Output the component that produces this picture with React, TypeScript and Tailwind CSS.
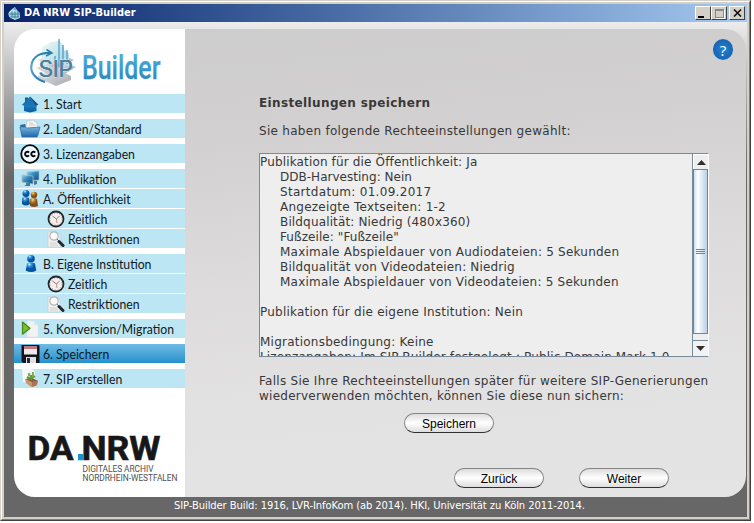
import type { ReactNode } from "react";

const HouseIcon = () => (
  <svg width="18" height="18" viewBox="0 0 18 18">
    <defs><linearGradient id="house" x2="0" y2="1"><stop stopColor="#1d86c4" /><stop offset="1" stopColor="#0a5a9f" /></linearGradient></defs>
    <path d="M4 2.500h3V7H4z" fill="#145d94" />
    <path d="M3 9h12.500v7L9 17.500 3 16z" fill="url(#house)" />
    <path d="M.8 10L9 1.500l8.300 8.200-1.800.8H2.500z" fill="#1a72b0" />
    <path d="M9 1.500l8.300 8.200-3 .6z" fill="#0e5288" />
  </svg>
);
const FolderIcon = () => (
  <svg width="22" height="19" viewBox="0 0 22 19">
    <defs><linearGradient id="folder" x2="0" y2="1"><stop stopColor="#78b5dc" /><stop offset="1" stopColor="#1f66a7" /></linearGradient></defs>
    <path d="M1 6l5-1 1 2h11v10H3z" fill="#2c6da6" />
    <path d="M7 7l1-5 6-1 4 3 1 6H6z" fill="#f6f5f5" stroke="#b7b7b7" strokeWidth=".6" />
    <path d="M10 4h4m-4 2h6" stroke="#b9b6bb" strokeWidth=".7" />
    <path d="M1 8h5l2 1 13-1-2 8-1 2H3z" fill="url(#folder)" stroke="#276aa5" strokeWidth=".7" />
  </svg>
);
const CcIcon = () => (
  <svg width="20" height="20" viewBox="0 0 20 20">
    <circle cx="10" cy="10" r="8.8" fill="#eefaff" stroke="#090909" strokeWidth="1.8" />
    <path d="M9 8.600a2.200 2.200 0 1 0 0 2.800M15.200 8.600a2.200 2.200 0 1 0 0 2.800" fill="none" stroke="#090909" strokeWidth="2" />
  </svg>
);
const MonitorIcon = () => (
  <svg width="19" height="18" viewBox="0 0 19 18">
    <defs><linearGradient id="screen" x2="1" y2="1"><stop stopColor="#9bd3ed" /><stop offset=".45" stopColor="#3086bd" /><stop offset="1" stopColor="#105088" /></linearGradient></defs>
    <path d="M6 2l12-1v9l-11 1z" fill="url(#screen)" stroke="#a6b7c2" strokeWidth=".7" />
    <path d="M1 5l11 1v8L1 12z" fill="url(#screen)" stroke="#a6b7c2" strokeWidth=".8" />
    <path d="M5 13h4v3H3l2-1zM13 11h3v3l-3 1z" fill="#477896" />
  </svg>
);
const PeopleIcon = () => (
  <svg width="18" height="19" viewBox="0 0 18 19">
    <defs>
      <radialGradient id="blue" cx=".35" cy=".2"><stop stopColor="#d0efff" /><stop offset=".4" stopColor="#3693d7" /><stop offset="1" stopColor="#06539d" /></radialGradient>
      <radialGradient id="gold" cx=".35" cy=".2"><stop stopColor="#f8dfaa" /><stop offset=".4" stopColor="#c58c37" /><stop offset="1" stopColor="#80501a" /></radialGradient>
    </defs>
    <circle cx="5" cy="4.5" r="3.5" fill="url(#blue)" /><path d="M1 9q4-2 7 0l1 6q-4 3-8 0z" fill="url(#blue)" />
    <circle cx="13" cy="6" r="3.2" fill="url(#gold)" /><path d="M9 10q4-2 7 0l1 7q-4 2-8 0z" fill="url(#gold)" />
  </svg>
);
const PersonIcon = () => (
  <svg className="ml-0.5" width="12" height="19" viewBox="0 0 12 19">
    <defs><radialGradient id="person" cx=".35" cy=".2"><stop stopColor="#d0f2ff" /><stop offset=".4" stopColor="#2994df" /><stop offset="1" stopColor="#0352a3" /></radialGradient></defs>
    <circle cx="6" cy="4.8" r="3.8" fill="url(#person)" /><path d="M2 9.5q4-2 8 0l1.300 7q-5 3-10.600 0z" fill="url(#person)" />
  </svg>
);
const ClockIcon = () => (
  <svg width="18" height="18" viewBox="0 0 18 18">
    <circle cx="9" cy="9" r="7.5" fill="#f2efef" stroke="#252627" strokeWidth="1.8" />
    <circle cx="9" cy="9" r="5.7" fill="none" stroke="#a6a4a6" strokeWidth=".8" strokeDasharray="1 2" />
    <path d="M5.5 6l4 3 3-3" fill="none" stroke="#805958" strokeWidth=".8" /><path d="M9.5 9l.5 4" stroke="#c87070" strokeWidth=".8" />
  </svg>
);
const SearchIcon = () => (
  <svg width="18" height="18" viewBox="0 0 18 18">
    <path d="M1 2h9l3 3v12H1z" fill="#f0f0ef" stroke="#c9cccd" strokeWidth=".7" />
    <path d="M3 13h7m-7 2h8" stroke="#c2c4c5" strokeWidth=".8" />
    <circle cx="7" cy="6" r="4.200" fill="#f8fafa" stroke="#b3b7ba" strokeWidth="1.200" />
    <path d="M10 9l2 2" stroke="#787a7d" /><path d="M12 11.500l4 4" stroke="#24282e" strokeWidth="3" strokeLinecap="round" />
  </svg>
);
const PlayIcon = () => (
  <svg width="18" height="19" viewBox="0 0 18 19">
    <path d="M6 2h7l4 4v12H6z" fill="#f1f3f3" stroke="#dde3e5" strokeWidth=".6" /><path d="M13 2v4h4" fill="#dde2e4" />
    <path d="M1.500 3l7.500 6.200-7.500 6z" fill="#79bd31" stroke="#438719" strokeWidth="1.200" strokeLinejoin="round" />
  </svg>
);
const DiskIcon = () => (
  <svg width="19" height="18" viewBox="0 0 19 18">
    <path d="M.5 0h17q1 0 1 1v17H2L.5 16z" fill="#14141c" /><path d="M3 1h13v8.500H3z" fill="#eee8e9" /><path d="M3 1h13v3H3z" fill="#c17780" />
    <path d="M5 12h10v6H5z" fill="#dfe0e3" /><path d="M6 13h3v5H6z" fill="#272832" />
  </svg>
);
const PackageIcon = () => (
  <svg width="18" height="19" viewBox="0 0 18 19">
    <path d="M1 0h10l3 3v10H2z" fill="#f6f7f6" />
    <path d="M4 10l6-1 7 3-2 5-5 1-5-4z" fill="#c4966e" /><path d="M5 10l6 3 6-1-6-3z" fill="#85583a" /><path d="M11 13v5l5-2 1-4z" fill="#a87454" />
    <path d="M10 11V6m0 4L6 8m4 2l4-3" fill="none" stroke="#5a9a3c" strokeWidth="2" /><path d="M7 4h2l1 4-3-1zm4-1h2v4l-2 2z" fill="#7fae55" />
  </svg>
);

const BrandMark = () => (
  <svg className="mt-1.5 ml-4 shrink-0 overflow-visible" width="146" height="54" viewBox="30 35 146 54">
    <defs>
      <linearGradient id="brand" x2="0" y2="1"><stop stopColor="#50b6df" /><stop offset="1" stopColor="#2580bb" /></linearGradient>
      <linearGradient id="sheet" x2="1" y2="1"><stop stopColor="#f0fafa" /><stop offset="1" stopColor="#a9d5e2" /></linearGradient>
      <linearGradient id="plate" x2="1" y2="1"><stop stopColor="#e9eaec" /><stop offset="1" stopColor="#a4a9ae" /></linearGradient>
      <linearGradient id="arc" x2="0" y2="1"><stop stopColor="#257fae" /><stop offset=".5" stopColor="#58acd3" /><stop offset="1" stopColor="#2c7bb0" /></linearGradient>
    </defs>
    <path d="M38 76l17-8 16 8v4l-15 6-18-8z" fill="url(#plate)" />
    <path d="M36 68l21-8 19 7-19 12z" fill="url(#plate)" />
    <path d="M38 60l18-8 18 8-17 9z" fill="url(#plate)" />
    <path d="M42 47l9-5 9-1 4 6v16l-22 2z" fill="url(#sheet)" />
    <path d="M64 50l5 3v13h-7z" fill="#b9dce8" />
    <path d="M59 67V39m4 26V45m-8 20V56m12 8V50" stroke="#4b9fc0" strokeWidth="1.300" />
    <path d="M45 82C35 79 30 72 31.500 65C33 56 41 52.500 51 53" fill="none" stroke="url(#arc)" strokeWidth="2.200" />
    <path d="M46.500 49.500l5.500 3.500-6 3" fill="none" stroke="#327fa8" strokeWidth="1.500" />
    <text x="38.500" y="76.500" fontFamily="Liberation Sans" fontSize="24" fill="#4a7f9e" stroke="#dcecf3" strokeWidth="1.200" paintOrder="stroke" textLength="34" lengthAdjust="spacingAndGlyphs">SIP</text>
    <text x="39" y="76.500" fontFamily="Liberation Sans" fontSize="24" fill="#4a7f9e" textLength="34" lengthAdjust="spacingAndGlyphs">SIP</text>
    <text x="82" y="79" fontFamily="Roboto" fontSize="32.500" fontWeight="500" fill="url(#brand)" stroke="url(#brand)" strokeWidth=".25" textLength="78.500" lengthAdjust="spacingAndGlyphs">Builder</text>
  </svg>
);

type Step = { label: string; icon: ReactNode; nested?: boolean; active?: boolean };
const groups: Step[][] = [
  [{ label: "1. Start", icon: <HouseIcon /> }],
  [{ label: "2. Laden/Standard", icon: <FolderIcon /> }],
  [{ label: "3. Lizenzangaben", icon: <CcIcon /> }],
  [{ label: "4. Publikation", icon: <MonitorIcon /> }, { label: "A. Öffentlichkeit", icon: <PeopleIcon /> }, { label: "Zeitlich", icon: <ClockIcon />, nested: true }, { label: "Restriktionen", icon: <SearchIcon />, nested: true }],
  [{ label: "B. Eigene Institution", icon: <PersonIcon /> }, { label: "Zeitlich", icon: <ClockIcon />, nested: true }, { label: "Restriktionen", icon: <SearchIcon />, nested: true }],
  [{ label: "5. Konversion/Migration", icon: <PlayIcon /> }],
  [{ label: "6. Speichern", icon: <DiskIcon />, active: true }],
  [{ label: "7. SIP erstellen", icon: <PackageIcon /> }],
];

const StepRow = ({ step }: { step: Step }) => (
  <div className={`flex h-[19px] items-center ${step.active ? "bg-gradient-to-b from-[#6ebbe4] to-[#2191cc]" : "bg-[#bde6f5]"}`}>
    <span className={`flex h-[19px] items-center justify-center overflow-visible ${step.nested ? "ml-[33px] w-[18px]" : "ml-[5px] w-[22px]"}`}>{step.icon}</span>
    <span className={`origin-left scale-x-[0.94] pt-0.5 font-[Lato,sans-serif] text-[13px] leading-[19px] whitespace-nowrap text-[#101820] ${step.nested ? "ml-[3px]" : "ml-[2px]"}`}>{step.label}</span>
  </div>
);

const settings = [
  { text: "Publikation für die Öffentlichkeit: Ja", style: "tracking-[0.15px]" },
  { text: "DDB-Harvesting: Nein", style: "pl-5 tracking-[0.02px]" },
  { text: "Startdatum: 01.09.2017", style: "pl-5 tracking-[0.3px]" },
  { text: "Angezeigte Textseiten: 1-2", style: "pl-5 tracking-[0.24px]" },
  { text: "Bildqualität: Niedrig (480x360)", style: "pl-5 tracking-[0.15px]" },
  { text: 'Fußzeile: "Fußzeile"', style: "pl-5 tracking-[0.08px]" },
  { text: "Maximale Abspieldauer von Audiodateien: 5 Sekunden", style: "pl-5 tracking-[0.22px]" },
  { text: "Bildqualität von Videodateien: Niedrig", style: "pl-5 tracking-[0.17px]" },
  { text: "Maximale Abspieldauer von Videodateien: 5 Sekunden", style: "pl-5 tracking-[0.22px]" },
  { text: "", style: "" },
  { text: "Publikation für die eigene Institution: Nein", style: "tracking-[0.23px]" },
  { text: "", style: "" },
  { text: "Migrationsbedingung: Keine", style: "tracking-[0.23px]" },
  { text: "Lizenzangaben: Im SIP-Builder festgelegt : Public Domain Mark 1.0", style: "tracking-[0.15px]" },
];

const PillButton = ({ children }: { children: ReactNode }) => (
  <button className="h-5 w-[90px] rounded-full border border-[#858585] border-b-[#303030] bg-gradient-to-b from-[#ddd] via-white to-[#ddd] pt-px font-['Liberation_Sans',sans-serif] text-[12px] leading-[18px] text-black">{children}</button>
);

const WindowButton = ({ children }: { children: ReactNode }) => (
  <button className="flex h-[14px] w-4 items-center justify-center border border-t-white border-r-[#404040] border-b-[#404040] border-l-white bg-[#d4d0c8]">{children}</button>
);

export default function App() {
  return (
    <div className="h-[523px] w-[754px] overflow-hidden bg-white">
      <div className="flex h-[521px] w-[751px] flex-col border border-t-[#d4d0c8] border-r-[#404040] border-b-[#404040] border-l-[#d4d0c8] bg-[#d4d0c8] font-['DejaVu_Sans',sans-serif]">
        <div className="flex h-full flex-col border border-t-white border-r-[#808080] border-b-[#808080] border-l-white p-[2px]">
          <header className="flex h-[18px] shrink-0 items-center bg-gradient-to-r from-[#0a246a] to-[#a6caf0] px-[2px]">
            <svg className="ml-0.5 shrink-0" width="13" height="15" viewBox="0 0 13 15">
              <path d="M1 6l3-3 3-2 2 3 3 3v5l-5 2-5-2z" fill="#a5d2dc" /><path d="M4 5v6m3-9v10m3-7v6M1 8h11M2 11h9" stroke="#437f98" /><path d="M2 11c-3-5 1-7 6-6" stroke="#d5f6f6" fill="none" />
            </svg>
            <h1 className="grow pl-[3px] font-['DejaVu_Sans_Condensed','DejaVu_Sans',sans-serif] text-[11px] font-bold text-white">DA NRW SIP-Builder</h1>
            <div className="flex">
              <WindowButton><i className="mt-[7px] mr-1 h-[2px] w-1.5 bg-black" /></WindowButton>
              <WindowButton><i className="h-[9px] w-[9px] border border-t-2 border-[#888] shadow-[1px_1px_0_white]" /></WindowButton>
              <span className="w-[2px]" />
              <WindowButton><svg width="9" height="8" viewBox="0 0 9 8"><path d="M1 .5l7 7m0-7l-7 7" stroke="#111" strokeWidth="1.6" /></svg></WindowButton>
            </div>
          </header>

          <div className="flex grow flex-col bg-[linear-gradient(#ececec_0px,#e2e2e2_12px,#a6a6a6_75px,#686768_155px,#686768_100%)] pt-[7px]">
            <main className="ml-[10px] flex h-[468px] w-[732px] overflow-hidden rounded-[21px]">
              <aside className="flex w-[171px] shrink-0 flex-col bg-white">
                <div className="h-[65px] shrink-0"><BrandMark /></div>
                <nav className="flex flex-col gap-1.5">
                  {groups.map((group, i) => <div className="flex flex-col gap-px" key={i}>{group.map((step) => <StepRow key={step.label} step={step} />)}</div>)}
                </nav>
                <svg className="mt-[45px] ml-3.5 shrink-0 overflow-visible" width="153" height="51" viewBox="28 433 153 51">
                  <g fontFamily="Roboto" fontWeight="700" fontSize="33.500" fill="#171719" stroke="#171719" strokeWidth=".6">
                    <text x="27.500" y="460" textLength="46" lengthAdjust="spacingAndGlyphs">DA</text>
                    <text x="81.500" y="460" textLength="79" lengthAdjust="spacingAndGlyphs">NRW</text>
                  </g>
                  <path d="M78 454h5.300v6.300H78z" fill="#1893cb" />
                  <g fontFamily="Roboto" fontSize="8.400" fill="#505050">
                    <text x="82.500" y="471.500" textLength="71" lengthAdjust="spacing">DIGITALES ARCHIV</text>
                    <text x="82.500" y="480.500" textLength="95" lengthAdjust="spacing">NORDRHEIN-WESTFALEN</text>
                  </g>
                </svg>
              </aside>

              <section className="flex grow flex-col bg-[linear-gradient(175deg,#cecdce_0%,#d2d0d1_22%,#dddbdc_50%,#e3e2e3_75%,#e5e4e5_100%)] pl-[74px] text-[12px] leading-[15px] text-[#383838]">
                <div className="flex h-[67px] justify-end pt-[10px] pr-[13px]">
                  <button className="flex h-[21px] w-5 items-center justify-center rounded-full bg-[radial-gradient(circle,#2382d0,#1767b5_65%,#609bd0)] font-['Open_Sans',sans-serif] text-[15px] leading-5 text-white">?</button>
                </div>
                <h2 className="h-7 text-[12px] font-bold tracking-[0.37px]">Einstellungen speichern</h2>
                <p className="h-[29px] tracking-[0.29px]">Sie haben folgende Rechteeinstellungen gewählt:</p>
                <div className="flex h-[204px] w-[450px] shrink-0 border border-t-[#7a8a99] border-r-white border-b-[#7a8a99] border-l-[#7a8a99] bg-[#eee]">
                  <div className="grow overflow-hidden pt-px whitespace-nowrap">
                    {settings.map((line, i) => <p key={i} className={`h-[15px] ${line.style}`}>{line.text}</p>)}
                  </div>
                  <div className="flex w-4 shrink-0 flex-col border-l border-[#7a8a99] bg-[#eee]">
                    <div className="flex h-[15px] items-center justify-center border-t border-l border-white"><svg width="9" height="5"><path d="M0 5l4.5-5L9 5z" fill="#303030" /></svg></div>
                    <div className="flex h-[165px] flex-col items-center justify-center gap-px border border-[#6382bf] bg-gradient-to-r from-[#c8ddf2] via-white via-30% to-[#b8cfe5]">
                      <i className="h-px w-[9px] bg-[#6382bf]" /><i className="h-px w-[9px] bg-[#6382bf]" /><i className="h-px w-[9px] bg-[#6382bf]" />
                    </div>
                    <div className="mt-auto flex h-4 items-center justify-center border-t border-[#7a8a99] bg-[#f2f2f2]"><svg width="9" height="5"><path d="M0 0h9L4.5 5z" fill="#303030" /></svg></div>
                  </div>
                </div>
                <p className="mt-[17px] whitespace-nowrap"><span className="tracking-[0.28px]">Falls Sie Ihre Rechteeinstellungen später für weitere SIP-Generierungen</span><br /><span className="tracking-[0.25px]">wiederverwenden möchten, können Sie diese nun sichern:</span></p>
                <div className="mt-[9px] ml-[145px] flex"><PillButton>Speichern</PillButton></div>
                <div className="mt-[35px] ml-[195px] flex gap-[35px]"><PillButton>Zurück</PillButton><PillButton>Weiter</PillButton></div>
              </section>
            </main>
            <footer className="pl-[170px] text-[10px] leading-[18px] tracking-[-0.1px] text-white">SIP-Builder Build: 1916, LVR-InfoKom (ab 2014). HKI, Universität zu Köln 2011-2014.</footer>
          </div>
        </div>
      </div>
    </div>
  );
}
